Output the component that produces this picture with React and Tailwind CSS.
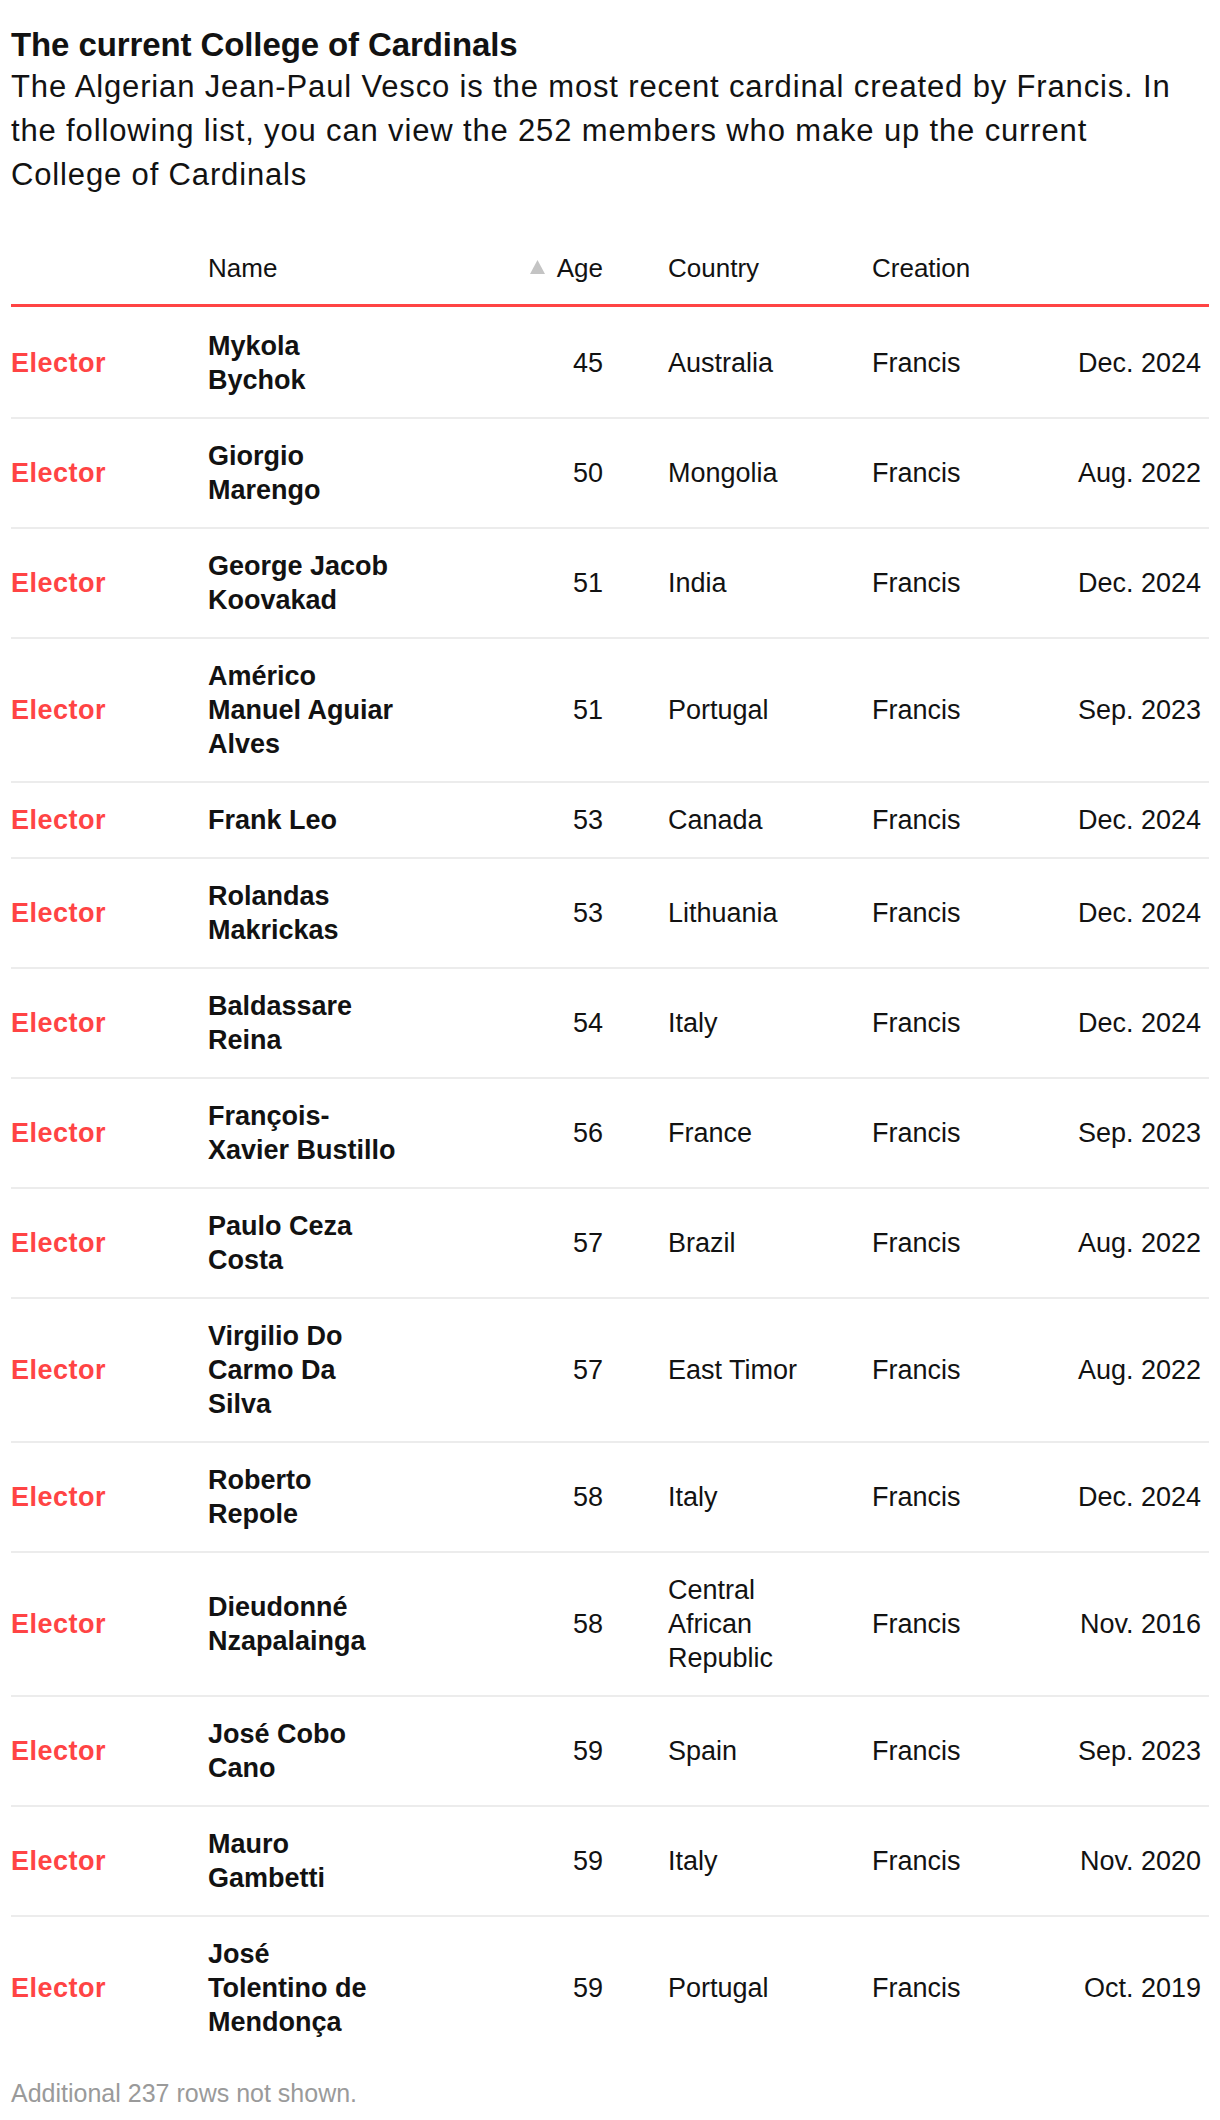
import React from 'react'

const rows = [
  { name: ['Mykola', 'Bychok'], age: 45, country: ['Australia'], date: 'Dec. 2024' },
  { name: ['Giorgio', 'Marengo'], age: 50, country: ['Mongolia'], date: 'Aug. 2022' },
  { name: ['George Jacob', 'Koovakad'], age: 51, country: ['India'], date: 'Dec. 2024' },
  { name: ['Américo', 'Manuel Aguiar', 'Alves'], age: 51, country: ['Portugal'], date: 'Sep. 2023' },
  { name: ['Frank Leo'], age: 53, country: ['Canada'], date: 'Dec. 2024' },
  { name: ['Rolandas', 'Makrickas'], age: 53, country: ['Lithuania'], date: 'Dec. 2024' },
  { name: ['Baldassare', 'Reina'], age: 54, country: ['Italy'], date: 'Dec. 2024' },
  { name: ['François-', 'Xavier Bustillo'], age: 56, country: ['France'], date: 'Sep. 2023' },
  { name: ['Paulo Ceza', 'Costa'], age: 57, country: ['Brazil'], date: 'Aug. 2022' },
  { name: ['Virgilio Do', 'Carmo Da', 'Silva'], age: 57, country: ['East Timor'], date: 'Aug. 2022' },
  { name: ['Roberto', 'Repole'], age: 58, country: ['Italy'], date: 'Dec. 2024' },
  { name: ['Dieudonné', 'Nzapalainga'], age: 58, country: ['Central', 'African', 'Republic'], date: 'Nov. 2016' },
  { name: ['José Cobo', 'Cano'], age: 59, country: ['Spain'], date: 'Sep. 2023' },
  { name: ['Mauro', 'Gambetti'], age: 59, country: ['Italy'], date: 'Nov. 2020' },
  { name: ['José', 'Tolentino de', 'Mendonça'], age: 59, country: ['Portugal'], date: 'Oct. 2019' },
]

const cols = 'grid grid-cols-[197px_260px_135px_269px_204px_1fr] items-center'

function Lines({ lines }) {
  return lines.map((l, i) => (
    <span key={i} className="block whitespace-nowrap">{l}</span>
  ))
}

export default function App() {
  return (
    <div className="bg-white px-[11px] pt-[25px] pb-6 text-[#121212]" style={{ fontFamily: '"Liberation Sans", Arial, sans-serif' }}>
      <h1 className="text-[33px] font-bold leading-[40px] tracking-[-0.1px]">The current College of Cardinals</h1>
      <p className="text-[31px] leading-[44px] tracking-[0.85px] text-[#121212]">
        The Algerian Jean-Paul Vesco is the most recent cardinal created by Francis. In<br />
        the following list, you can view the 252 members who make up the current<br />
        College of Cardinals
      </p>

      <div className="mt-[34px]">
        <div className={`${cols} border-b-[3px] border-[#ff4444] pt-5 pb-[19px] text-[26px] leading-[34px]`}>
          <div />
          <div>Name</div>
          <div className="flex items-center justify-end gap-3">
            <svg width="15" height="14" viewBox="0 0 15 14" className="mb-0.5">
              <path d="M7.5 0 L15 14 L0 14 Z" fill="#c4c4c4" />
            </svg>
            <span>Age</span>
          </div>
          <div className="pl-[65px]">Country</div>
          <div>Creation</div>
          <div />
        </div>

        <div className="pt-[2px]">
          {rows.map((r, i) => (
            <div
              key={i}
              className={`${cols} py-5 text-[27px] leading-[34px] ${i < rows.length - 1 ? 'border-b-2 border-[#ececec]' : ''}`}
            >
              <div className="font-bold tracking-[0.5px] text-[#ff4444]">Elector</div>
              <div className="font-bold"><Lines lines={r.name} /></div>
              <div className="text-right">{r.age}</div>
              <div className="pl-[65px]"><Lines lines={r.country} /></div>
              <div>Francis</div>
              <div className="pr-2 text-right whitespace-nowrap">{r.date}</div>
            </div>
          ))}
        </div>
      </div>

      <p className="mt-[17px] text-[25px] leading-[34px] text-[#9a9a9a]">Additional 237 rows not shown.</p>
    </div>
  )
}
